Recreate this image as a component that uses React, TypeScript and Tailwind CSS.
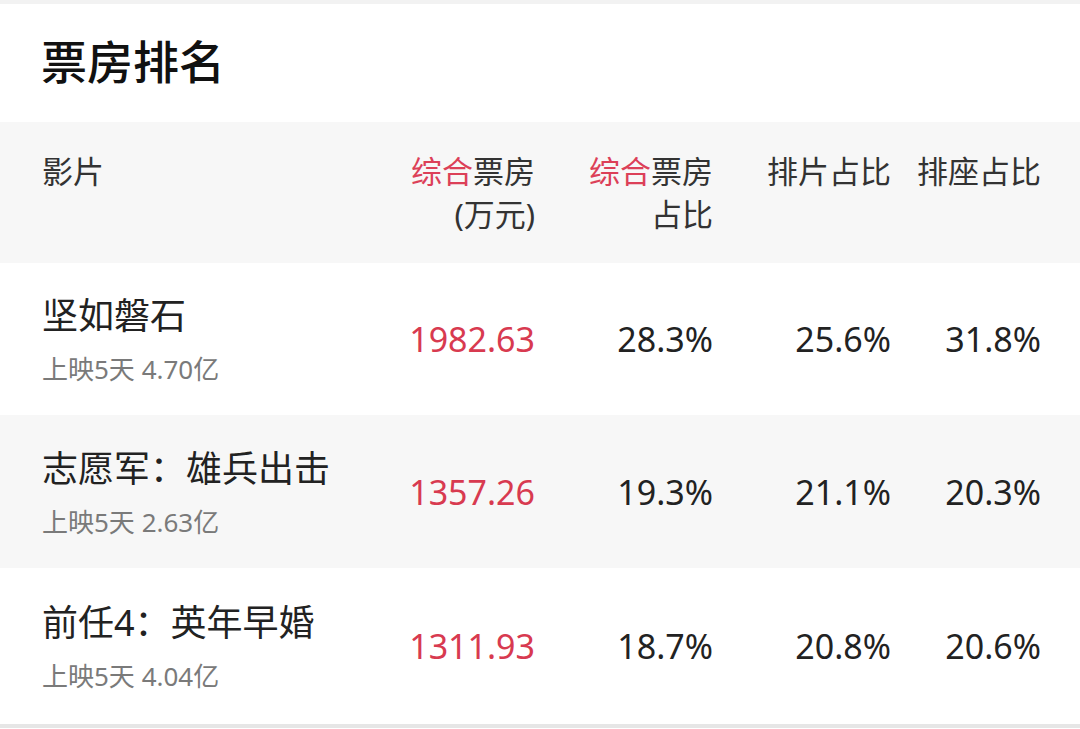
import React from 'react';

interface Film {
  name: string;
  sub: string;
  box: string;
  share: string;
  showShare: string;
  seatShare: string;
  rowClass: string;
}

const films: Film[] = [
  { name: '坚如磐石', sub: '上映5天 4.70亿', box: '1982.63', share: '28.3%', showShare: '25.6%', seatShare: '31.8%', rowClass: 'h-[152px] bg-white' },
  { name: '志愿军：雄兵出击', sub: '上映5天 2.63亿', box: '1357.26', share: '19.3%', showShare: '21.1%', seatShare: '20.3%', rowClass: 'h-[153px] bg-[#f7f7f7]' },
  { name: '前任4：英年早婚', sub: '上映5天 4.04亿', box: '1311.93', share: '18.7%', showShare: '20.8%', seatShare: '20.6%', rowClass: 'h-[156px] bg-white' },
];

const font = "font-['Noto_Sans','Noto_Sans_CJK_SC',sans-serif]";
const cols = 'grid grid-cols-[1fr_150px_178px_178px_150px] pl-[42px] pr-[39px]';

export default function App() {
  return (
    <div className={`w-[1080px] h-[729px] bg-white overflow-hidden ${font}`}>
      <div className="h-[4px] bg-[#f2f2f2]" />
      {/* 标题 */}
      <div className="h-[118px] flex items-center pl-[41px] pb-[4px]">
        <h1 className="text-[46px] font-medium text-[#111] leading-none">票房排名</h1>
      </div>

      {/* 表头 */}
      <div className={`${cols} h-[141px] bg-[#f7f7f7] pt-[28px] text-[31px] leading-[43px] text-[#333]`}>
        <div>影片</div>
        <div className="text-right">
          <div><span className="text-[#dc4058]">综合</span>票房</div>
          <div>(万元)</div>
        </div>
        <div className="text-right">
          <div><span className="text-[#dc4058]">综合</span>票房</div>
          <div>占比</div>
        </div>
        <div className="text-right">排片占比</div>
        <div className="text-right">排座占比</div>
      </div>

      {/* 影片行 */}
      {films.map((f) => (
        <div key={f.name} className={`${cols} items-center ${f.rowClass}`}>
          <div className="flex flex-col gap-[22px] pt-[2px]">
            <div className="text-[36px] leading-none text-[#222]">{f.name}</div>
            <div className="text-[26px] leading-none text-[#7a7a7a]">{f.sub}</div>
          </div>
          <div className="text-right text-[34px] leading-none text-[#d83a50]">{f.box}</div>
          <div className="text-right text-[34px] leading-none text-[#222]">{f.share}</div>
          <div className="text-right text-[34px] leading-none text-[#222]">{f.showShare}</div>
          <div className="text-right text-[34px] leading-none text-[#222]">{f.seatShare}</div>
        </div>
      ))}
      <div className="h-[4px] bg-[#e6e6e6]" />
    </div>
  );
}
